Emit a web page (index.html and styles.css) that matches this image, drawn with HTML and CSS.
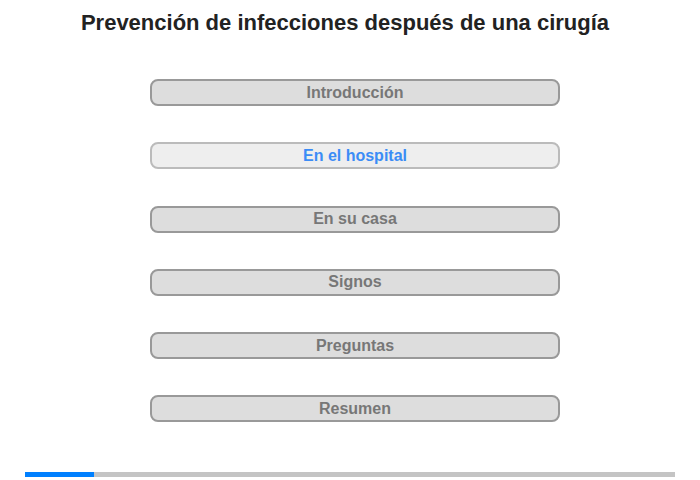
FILE: index.html
```html
<!DOCTYPE html>
<html lang="es">

<head>
    <meta charset="UTF-8" />
    <meta name="viewport" content="width=device-width, initial-scale=1.0" />
    <title>Prevención de infecciones después de una cirugía</title>
    <link rel="stylesheet" href="styles.css">
</head>

<body>
    <h1>Prevención de infecciones después de una cirugía</h1>

    <div class="menu">
        <button class="item">Introducción</button>
        <button class="item active">En el hospital</button>
        <button class="item">En su casa</button>
        <button class="item">Signos</button>
        <button class="item">Preguntas</button>
        <button class="item">Resumen</button>
    </div>

    <div class="progress">
        <div class="progress-fill"></div>
    </div>
</body>

</html>
```

FILE: styles.css
```css
body {
    margin: 0;
    width: 700px;
    height: 480px;
    background-color: white;
    font-family: "Liberation Sans", Arial, sans-serif;
    display: flex;
    flex-direction: column;
}

h1 {
    margin: 10px 0 0 0;
    padding-right: 10px;
    text-align: center;
    font-size: 22px;
    line-height: 26px;
    color: #222;
}

.menu {
    margin-top: 43px;
    margin-left: 150px;
    width: 410px;
    display: flex;
    flex-direction: column;
    gap: 36.3px;
}

.item {
    height: 27px;
    background-color: #dddddd;
    border: 2px solid #999999;
    border-radius: 8px;
    color: #777777;
    font-family: "Liberation Sans", Arial, sans-serif;
    font-size: 16px;
    font-weight: bold;
    padding: 0;
    cursor: pointer;
}

.item.active {
    background-color: #eeeeee;
    border-color: #bbbbbb;
    color: #3b8cf6;
}

.progress {
    margin-top: auto;
    margin-bottom: 3px;
    margin-left: 25px;
    width: 650px;
    height: 5px;
    background-color: #c4c4c4;
}

.progress-fill {
    width: 69px;
    height: 100%;
    background-color: #0080ff;
}
```
